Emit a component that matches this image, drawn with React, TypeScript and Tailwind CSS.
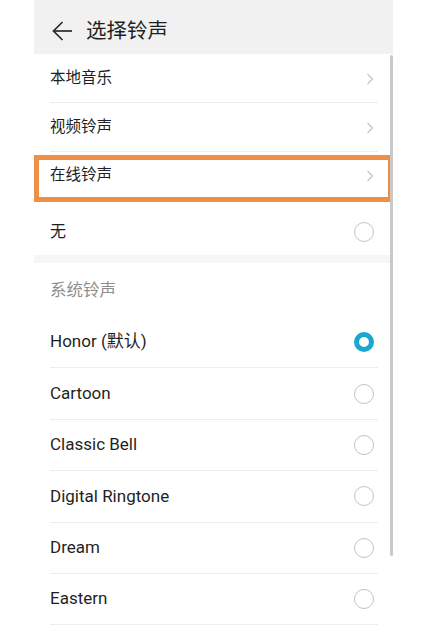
import React from "react";

const font = { fontFamily: '"Roboto", "Noto Sans CJK SC", sans-serif' };

const linkRows = ["本地音乐", "视频铃声", "在线铃声"];

const ringtones = [
  { name: "Honor (默认)", selected: true },
  { name: "Cartoon", selected: false },
  { name: "Classic Bell", selected: false },
  { name: "Digital Ringtone", selected: false },
  { name: "Dream", selected: false },
  { name: "Eastern", selected: false },
];

function Chevron() {
  return (
    <svg width="8" height="12" viewBox="0 0 8 12" fill="none" className="mr-[4px]">
      <polyline points="1.5,1 6.5,6 1.5,11" stroke="#c4c4c4" strokeWidth="1.2" />
    </svg>
  );
}

function Radio({ selected }: { selected: boolean }) {
  return selected ? (
    <div className="w-[20px] h-[20px] rounded-full border-[5.5px] border-[#19a7d2] bg-white mr-[4px]" />
  ) : (
    <div className="w-[20px] h-[20px] rounded-full border-[1.5px] border-[#c2c2c2] bg-white mr-[4px]" />
  );
}

export default function App() {
  return (
    <div className="relative w-[431px] h-[628px] bg-white overflow-hidden" style={font}>
      <div className="ml-[34px] w-[359px]">
        {/* header */}
        <div className="h-[54px] bg-[#f1f1f1] flex items-center pl-[18px] pt-[8px]">
          <svg width="22" height="22" viewBox="0 0 22 22" fill="none">
            <line x1="1.5" y1="11" x2="20" y2="11" stroke="#2a2a2a" strokeWidth="1.7" />
            <polyline points="10.5,2 1.5,11 10.5,20" stroke="#2a2a2a" strokeWidth="1.7" fill="none" />
          </svg>
          <span className="ml-[12px] text-[20.5px] text-[#1f1f1f]">选择铃声</span>
        </div>

        {/* link rows */}
        {linkRows.map((label, i) => (
          <div key={label} className="px-[16px] pr-[15px]">
            <div
              className={
                i < 2
                  ? "h-[49px] flex items-center justify-between border-b border-[#ececec] pt-[1px]"
                  : "h-[48px] flex items-center justify-between"
              }
            >
              <span className="text-[15.5px] text-[#1f1f1f]">{label}</span>
              <Chevron />
            </div>
          </div>
        ))}

        {/* none */}
        <div className="px-[16px] pr-[15px]">
          <div className="h-[55px] flex items-center justify-between pt-[8px]">
            <span className="text-[16px] text-[#1f1f1f]">无</span>
            <Radio selected={false} />
          </div>
        </div>

        <div className="h-[8px] bg-[#f6f6f6]" />

        {/* system ringtones */}
        <div className="h-[54px] flex items-center pl-[16px] pt-[2px]">
          <span className="text-[16.5px] text-[#8e8e8e]">系统铃声</span>
        </div>

        {ringtones.map((r) => (
          <div key={r.name} className="px-[16px] pr-[15px]">
            <div className="h-[51.4px] flex items-center justify-between border-b border-[#ececec]">
              <span className="text-[17px] text-[#1f1f1f]">{r.name}</span>
              <Radio selected={r.selected} />
            </div>
          </div>
        ))}
      </div>

      {/* highlight box */}
      <div className="absolute left-[34px] top-[155px] w-[359px] h-[47px] border-[5px] border-[#ef8f45]" />

      {/* scrollbar */}
      <div className="absolute left-[390px] top-[55px] w-[3px] h-[501px] bg-[#c9c9c9] rounded-full" />
    </div>
  );
}
